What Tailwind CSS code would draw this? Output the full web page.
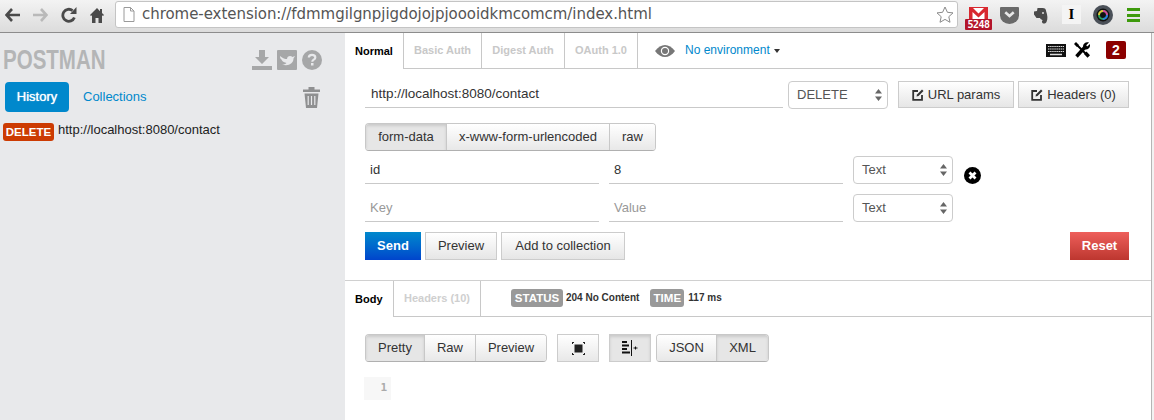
<!DOCTYPE html>
<html>
<head>
<meta charset="utf-8">
<script src="https://cdn.jsdelivr.net/npm/@tailwindcss/browser@4"></script>
</head>
<body class="m-0 bg-white overflow-hidden font-['Liberation_Sans',Arial,sans-serif] text-[13px] text-[#333]">
<div class="w-[1154px] h-[420px] flex flex-col overflow-hidden">
  <!-- browser toolbar -->
  <header class="h-[33px] shrink-0 flex items-start border-b border-[#8c8c8c] bg-gradient-to-b from-[#f3f3f3] to-[#dcdcdc]">
    <div class="w-[115px] h-[32px] shrink-0 flex items-center pl-[5px] pb-[2px]">
      <svg class="w-[15px] h-[14px]" viewBox="0 0 15 14"><path d="M7 1 1.500 7 7 13M2 7h13" fill="none" stroke="#4a4a4a" stroke-width="2.600"/></svg>
      <svg class="w-[15px] h-[14px] ml-[13px]" viewBox="0 0 15 14"><path d="M8 1l5.500 6L8 13M13 7H0" fill="none" stroke="#b9b9b9" stroke-width="2.600"/></svg>
      <svg class="w-[16px] h-[16px] ml-[13px]" viewBox="0 0 16 16"><path d="M13.400 10.500A6 6 0 1 1 11.600 3.600" fill="none" stroke="#4a4a4a" stroke-width="2.800"/><path d="M9 7h6.500V0z" fill="#4a4a4a"/></svg>
      <svg class="w-[14px] h-[15px] ml-[13px]" viewBox="0 0 14 15"><path d="M7 0 0 7l1 1 1-.8V15h3.500v-5h3v5H12V7.200l1 .8 1-1-2-2V1h-2v2.300z" fill="#4a4a4a"/></svg>
    </div>
    <div class="w-[843px] h-[27px] mt-[1px] shrink-0 flex items-center bg-white border border-[#c4c4c4] rounded-[3px] pl-[7px] relative">
      <svg class="w-[12px] h-[15px]" viewBox="0 0 12 15"><path d="M1 .5h6.500L11 4v10.500H1zM7.500.5V4H11" fill="#fff" stroke="#9a9a9a"/></svg>
      <span class="ml-[7px] font-['DejaVu_Sans',sans-serif] text-[15px] tracking-[-0.05px] leading-none text-[#555] whitespace-nowrap">chrome-extension://fdmmgilgnpjigdojojpjoooidkmcomcm/index.html</span>
      <svg class="absolute right-[3px] top-[4px] w-[18px] h-[17px]" viewBox="0 0 18 17"><path d="M9 1l2.400 5.300 5.600.6-4.200 3.800 1.200 5.600L9 13.400l-5 2.900 1.200-5.600L1 6.900l5.600-.6z" fill="#fff" stroke="#8a8a8a"/></svg>
    </div>
    <div class="flex-1 h-[32px] relative">
      <!-- extensions -->
      <div class="absolute left-[7px] top-[7px] w-[27px] h-[23px]">
        <svg class="absolute left-[4px] top-0 w-[19px] h-[13px]" viewBox="0 0 19 13"><path d="M0 0h19v13H0z" fill="#d8282f"/><path d="M4 1h11L9.500 6.500zM3.500 13V5l6 5.500 6-5.500v8z" fill="#fff"/></svg>
        <div class="absolute left-0 top-[12px] w-[27px] h-[11px] bg-[#b3142a] rounded-[1px] text-white text-[10px] font-bold leading-[11px] text-center font-['DejaVu_Sans_Mono',monospace] tracking-[-0.5px]">5248</div>
      </div>
      <svg class="absolute left-[42px] top-[7px] w-[19px] h-[17px]" viewBox="0 0 18 16"><path d="M1 0h16a1 1 0 0 1 1 1v7a9 8 0 0 1-18 0V1a1 1 0 0 1 1-1z" fill="#6a6a6a"/><path d="M5 5 9 8.500 13 5" fill="none" stroke="#e8e8e8" stroke-width="2.500"/></svg>
      <svg class="absolute left-[76px] top-[8px] w-[14px] h-[16px]" viewBox="0 0 14 16"><path d="M3.500 0h5c2.500 0 3.500 1 3.700 3.500C13.500 7 14 11 12.500 14c-1.200 2-4 2-4.500 0-.3-1.500 1-2 1.500-1.500-1.500-1-3-1-3.500-2.500H2.500L0 6.500V3.500L3 3z" fill="#4a4a4a"/><circle cx="9" cy="5" r="1" fill="#ddd"/></svg>
      <div class="absolute left-[104px] top-[5px] w-[19px] h-[19px] bg-[#f4f4f4] text-center text-black text-[15px] font-bold leading-[19px] font-['Liberation_Serif',serif]">I</div>
      <svg class="absolute left-[135px] top-[5px] w-[20px] h-[20px]" viewBox="0 0 20 20"><circle cx="10" cy="10" r="10" fill="#4a5058"/><circle cx="10" cy="10" r="6.500" fill="#111"/><circle cx="10" cy="10" r="4" fill="none" stroke="#2aa05a" stroke-width="2"/><path d="M10 6a4 4 0 0 1 4 4" fill="none" stroke="#d8459a" stroke-width="2"/><path d="M6 10a4 4 0 0 1 4-4" fill="none" stroke="#e0c23a" stroke-width="2"/><path d="M14 10a4 4 0 0 1-4 4" fill="none" stroke="#2b7de0" stroke-width="2"/></svg>
      <div class="absolute left-[169px] top-[8px] w-[13px] flex flex-col gap-[2.500px]">
        <div class="h-[3px] bg-[#3d9a0c]"></div><div class="h-[3px] bg-[#3d9a0c]"></div><div class="h-[3px] bg-[#3d9a0c]"></div>
      </div>
    </div>
  </header>

  <div class="flex flex-1 min-h-0">
    <!-- sidebar -->
    <aside class="w-[345px] shrink-0 bg-[#e8e9eb] flex flex-col">
      <div class="h-[49px] flex items-start pt-[14px] pl-[3px] relative">
        <span class="inline-block origin-left scale-x-[0.76] font-bold text-[27px] leading-[27px] text-[#b4b5b6]">POSTMAN</span>
        <div class="absolute left-[252px] top-[17px] flex items-center gap-[5px]">
          <svg class="w-[20px] h-[20px]" viewBox="0 0 20 20"><path d="M7 0h6v7h4l-7 7-7-7h4zM0 16h20v4H0z" fill="#a6a7a8"/></svg>
          <svg class="w-[20px] h-[20px]" viewBox="0 0 20 20"><rect width="20" height="20" rx="1" fill="#a6a7a8"/><path d="M3 6c3 2.500 5 3 7 3 0-3 3.500-4 5.500-2L18 6l-1.500 2.500c0 5-5 8-11.500 6 2 0 3.500-.5 4.500-1.500C6 12 5 11 4.500 9.500 3.500 9 3 8 3 6z" fill="#e8e9eb"/></svg>
          <svg class="w-[20px] h-[20px]" viewBox="0 0 20 20"><circle cx="10" cy="10" r="10" fill="#a6a7a8"/><path d="M6.800 7.500C6.800 5.700 8.200 4.800 10 4.800s3.300 1 3.300 2.600c0 2.300-3 2.300-3 4.300" fill="none" stroke="#e8e9eb" stroke-width="2.200"/><rect x="9" y="13" width="2.500" height="2.500" fill="#e8e9eb"/></svg>
        </div>
      </div>
      <div class="flex items-center h-[30px] pl-[5px] relative">
        <div class="w-[64px] h-[30px] rounded-[4px] bg-[#0088cc] text-white text-center leading-[30px] [text-shadow:0_0_1px_#fff]">History</div>
        <span class="ml-[14px] text-[#0088cc]">Collections</span>
        <svg class="absolute left-[303px] top-[5px] w-[17px] h-[21px]" viewBox="0 0 17 21"><path d="M5.500 2.500V0h6v2.500H17V5H0V2.500zM1.500 6.500h14L14 21H3z" fill="#8f9091"/><path d="M5.200 9v9M8.500 9v9M11.800 9v9" stroke="#e8e9eb" stroke-width="1.200"/></svg>
      </div>
      <div class="flex items-center mt-[11px] pl-[3px] h-[18px]">
        <span class="w-[51px] h-[18px] rounded-[3px] bg-[#cc3b02] text-white font-bold text-[11.500px] leading-[18px] text-center">DELETE</span>
        <span class="ml-[4px] text-[#222] whitespace-nowrap leading-[14px] mb-[4px]">http://localhost:8080/contact</span>
      </div>
    </aside>

    <!-- main -->
    <main class="w-[806px] shrink-0 flex flex-col">
      <!-- request tabs -->
      <nav class="h-[36px] shrink-0 flex relative text-[11px] font-bold text-[#c8c8c8]">
        <div class="w-[59px] h-[36px] border-r border-[#c8c8c8] bg-white text-black flex items-center pl-[10px]">Normal</div>
        <div class="flex flex-1 h-[36px] border-b border-[#c8c8c8] items-stretch">
          <div class="w-[78px] h-[35px] border-r border-[#c8c8c8] flex items-center justify-center">Basic Auth</div>
          <div class="w-[83px] h-[35px] border-r border-[#c8c8c8] flex items-center justify-center">Digest Auth</div>
          <div class="w-[73px] h-[35px] border-r border-[#c8c8c8] flex items-center justify-center">OAuth 1.0</div>
          <div class="flex items-center ml-[17px] pb-[2px] font-normal text-[12px] text-[#0088cc]">
            <svg class="w-[20px] h-[12px] mt-[3px]" viewBox="0 0 20 12"><path d="M0 6c3-4 6.500-6 10-6s7 2 10 6c-3 4-6.500 6-10 6S3 10 0 6z" fill="#777"/><circle cx="10" cy="6" r="4.200" fill="#fff"/><circle cx="10" cy="6" r="3" fill="#777"/></svg>
            <span class="ml-[10px]">No environment</span>
            <span class="ml-[4px] mt-[2px] w-0 h-0 border-x-[3.500px] border-x-transparent border-t-[4px] border-t-[#333]"></span>
          </div>
        </div>
        <div class="absolute left-[701px] top-[8px] flex items-center">
          <svg class="w-[20px] h-[13px]" viewBox="0 0 20 13"><rect width="20" height="13" fill="#111"/><path d="M2 2.500h16M2 5h16M2 7.500h16" stroke="#ddd" stroke-width="1.200" stroke-dasharray="1.500 .6"/><path d="M4 10.500h12" stroke="#ddd" stroke-width="1.500"/></svg>
          <svg class="w-[16px] h-[16px] ml-[8px]" viewBox="0 0 16 16"><path d="M2.500 14.500 11.500 4.500" stroke="#000" stroke-width="3.400"/><path d="M9 4.500c0-3 3-5 6-4l-2.800 2.800 1 1.200L16 2c.6 3-1.500 6-5 5.500z" fill="#000"/><path d="M2.500 2.500l10 10" stroke="#000" stroke-width="2"/><path d="M0 2 2 0l3 3-2 2zM10 12l2.500-2.500 3.500 3.800-2.500 2.500z" fill="#000"/></svg>
          <div class="w-[20px] h-[18px] ml-[16px] rounded-[2px] bg-[#8b0000] text-white text-[14px] font-bold leading-[18px] text-center">2</div>
        </div>
      </nav>

      <!-- url row -->
      <div class="flex items-start ml-[20px] mt-[12px] h-[28px]">
        <div class="w-[418px] h-[27px] border-b border-[#c9c9c9] pl-[6px] leading-[26px] text-[13.500px] text-[#333]">http://localhost:8080/contact</div>
        <div class="ml-[5px] w-[100px] h-[28px] rounded-[4px] border border-[#ccc] flex items-center justify-between pl-[8px] pr-[5px] text-[#555]">DELETE
          <svg class="w-[7px] h-[12px]" viewBox="0 0 7 12"><path d="M3.500 0 7 4.500H0zM3.500 12 0 7.500h7z" fill="#666"/></svg>
        </div>
        <button class="ml-[10px] w-[116px] h-[27px] border border-[#ccc] bg-gradient-to-b from-white to-[#e6e6e6] flex items-center justify-center text-[#333]">
          <svg class="w-[12px] h-[12px] mr-[4px]" viewBox="0 0 12 12"><path d="M6 2H1.200v8.800H10V6" fill="none" stroke="#333" stroke-width="1.800"/><path d="M4.500 7.500l.5-2L10 .5l1.500 1.500-5 5z" fill="#333"/></svg>URL params</button>
        <button class="ml-[4px] w-[111px] h-[27px] border border-[#ccc] bg-gradient-to-b from-white to-[#e6e6e6] flex items-center justify-center text-[#333]">
          <svg class="w-[12px] h-[12px] mr-[4px]" viewBox="0 0 12 12"><path d="M6 2H1.200v8.800H10V6" fill="none" stroke="#333" stroke-width="1.800"/><path d="M4.500 7.500l.5-2L10 .5l1.500 1.500-5 5z" fill="#333"/></svg>Headers (0)</button>
      </div>

      <!-- body type -->
      <div class="flex ml-[20px] mt-[14px] w-[291px] h-[28px] rounded-[4px] border border-[#c8c8c8] border-b-[#b0b0b0] overflow-hidden text-[#333]">
        <div class="w-[81px] bg-[#e6e6e6] shadow-[inset_0_2px_3px_rgba(0,0,0,0.12)] border-r border-[#c8c8c8] text-center leading-[26px]">form-data</div>
        <div class="w-[163px] bg-gradient-to-b from-white to-[#e8e8e8] border-r border-[#c8c8c8] text-center leading-[26px]">x-www-form-urlencoded</div>
        <div class="flex-1 bg-gradient-to-b from-white to-[#e8e8e8] text-center leading-[26px]">raw</div>
      </div>

      <!-- params -->
      <div class="flex items-start ml-[20px] mt-[5px] h-[28px]">
        <div class="w-[234px] h-[28px] border-b border-[#c9c9c9] pl-[5px] leading-[27px] text-[#333]">id</div>
        <div class="ml-[10px] w-[234px] h-[28px] border-b border-[#c9c9c9] pl-[5px] leading-[27px] text-[#333]">8</div>
        <div class="ml-[10px] w-[100px] h-[28px] rounded-[4px] border border-[#ccc] flex items-center justify-between pl-[8px] pr-[5px] text-[#555]">Text
          <svg class="w-[7px] h-[12px]" viewBox="0 0 7 12"><path d="M3.500 0 7 4.500H0zM3.500 12 0 7.500h7z" fill="#666"/></svg>
        </div>
        <svg class="ml-[11px] mt-[11px] w-[17px] h-[17px]" viewBox="0 0 17 17"><circle cx="8.500" cy="8.500" r="8.500" fill="#000"/><path d="M5.500 5.500l6 6M11.500 5.500l-6 6" stroke="#fff" stroke-width="2.800"/></svg>
      </div>
      <div class="flex items-start ml-[20px] mt-[10px] h-[28px]">
        <div class="w-[234px] h-[28px] border-b border-[#c9c9c9] pl-[5px] leading-[27px] text-[#999]">Key</div>
        <div class="ml-[10px] w-[234px] h-[28px] border-b border-[#c9c9c9] pl-[5px] leading-[27px] text-[#999]">Value</div>
        <div class="ml-[10px] w-[100px] h-[28px] rounded-[4px] border border-[#ccc] flex items-center justify-between pl-[8px] pr-[5px] text-[#555]">Text
          <svg class="w-[7px] h-[12px]" viewBox="0 0 7 12"><path d="M3.500 0 7 4.500H0zM3.500 12 0 7.500h7z" fill="#666"/></svg>
        </div>
      </div>

      <!-- actions -->
      <div class="flex items-start ml-[20px] mt-[10px] h-[28px] w-[764px]">
        <button class="w-[56px] h-[28px] bg-gradient-to-b from-[#0088cc] to-[#0044cc] text-white font-bold text-center">Send</button>
        <button class="ml-[4px] w-[72px] h-[28px] border border-[#ccc] bg-gradient-to-b from-white to-[#e6e6e6] text-[#333] text-center">Preview</button>
        <button class="ml-[4px] w-[124px] h-[28px] border border-[#ccc] bg-gradient-to-b from-white to-[#e6e6e6] text-[#333] text-center">Add to collection</button>
        <button class="ml-auto w-[59px] h-[28px] bg-gradient-to-b from-[#ee5f5b] to-[#bd362f] text-white font-bold text-center">Reset</button>
      </div>

      <!-- response tabs -->
      <div class="mt-[20px] h-[37px] shrink-0 border-t border-[#d0d0d0] flex text-[11px] font-bold">
        <div class="w-[49px] h-[36px] border-r border-[#c8c8c8] text-black flex items-center pl-[10px]">Body</div>
        <div class="flex-1 h-[36px] border-b border-[#c8c8c8] flex items-start">
          <div class="w-[87px] h-[35px] border-r border-[#c8c8c8] text-[#cfcfcf] flex items-center justify-center">Headers (10)</div>
          <div class="flex items-center h-[34px] ml-[30px] pb-[1px] text-[#333]">
            <span class="w-[52px] h-[18px] rounded-[3px] bg-[#999] text-white text-[11.500px] leading-[18px] text-center">STATUS</span>
            <span class="ml-[3px] text-[10px]">204 No Content</span>
            <span class="ml-[11px] w-[34px] h-[18px] rounded-[3px] bg-[#999] text-white text-[11.500px] leading-[18px] text-center">TIME</span>
            <span class="ml-[4px] text-[10px]">117 ms</span>
          </div>
        </div>
      </div>

      <!-- response controls -->
      <div class="flex items-start ml-[20px] mt-[17px] h-[28px] text-[#333]">
        <div class="flex w-[182px] h-[28px] rounded-[4px] border border-[#c8c8c8] border-b-[#b0b0b0] overflow-hidden">
          <div class="w-[59px] bg-[#e6e6e6] shadow-[inset_0_2px_3px_rgba(0,0,0,0.12)] border-r border-[#c8c8c8] text-center leading-[26px]">Pretty</div>
          <div class="w-[51px] bg-gradient-to-b from-white to-[#e8e8e8] border-r border-[#c8c8c8] text-center leading-[26px]">Raw</div>
          <div class="flex-1 bg-gradient-to-b from-white to-[#e8e8e8] text-center leading-[26px]">Preview</div>
        </div>
        <button class="ml-[10px] w-[42px] h-[28px] border border-[#ccc] bg-gradient-to-b from-white to-[#e8e8e8] flex items-center justify-center">
          <svg class="w-[13px] h-[13px]" viewBox="0 0 13 13"><rect x="2.500" y="2.500" width="8" height="8" fill="#222"/><path d="M0 0h2v1H1v1H0zM11 0h2v2h-1V1h-1zM0 11h1v1h1v1H0zM12 11h1v2h-2v-1h1z" fill="#222"/></svg>
        </button>
        <button class="ml-[10px] w-[42px] h-[28px] border border-[#ccc] bg-[#e6e6e6] shadow-[inset_0_2px_3px_rgba(0,0,0,0.12)] flex items-center justify-center">
          <svg class="w-[16px] h-[16px]" viewBox="0 0 16 16"><path d="M0 1h5v2H0zM0 4.500h7v2H0zM0 8h5v2H0zM0 11.500h8v2H0z" fill="#111"/><path d="M9.500 0v16" stroke="#111"/><path d="M11.500 8h4M13.500 6.500v3" stroke="#111"/></svg>
        </button>
        <div class="ml-[5px] flex w-[113px] h-[28px] rounded-[4px] border border-[#c8c8c8] border-b-[#b0b0b0] overflow-hidden">
          <div class="w-[60px] bg-gradient-to-b from-white to-[#e8e8e8] border-r border-[#c8c8c8] text-center leading-[26px]">JSON</div>
          <div class="flex-1 bg-[#e6e6e6] shadow-[inset_0_2px_3px_rgba(0,0,0,0.12)] text-center leading-[26px]">XML</div>
        </div>
      </div>

      <!-- code -->
      <div class="ml-[19px] mt-[15px] w-[27px] h-[23px] bg-[#f7f7f7] text-right pr-[4px] font-['DejaVu_Sans_Mono',monospace] text-[11px] font-bold leading-[22px] text-[#aaa]">1</div>
    </main>
    <div class="flex-1 bg-[#f2f2f2] border-l border-[#b5b5b5]"></div>
  </div>
</div>
</body>
</html>
